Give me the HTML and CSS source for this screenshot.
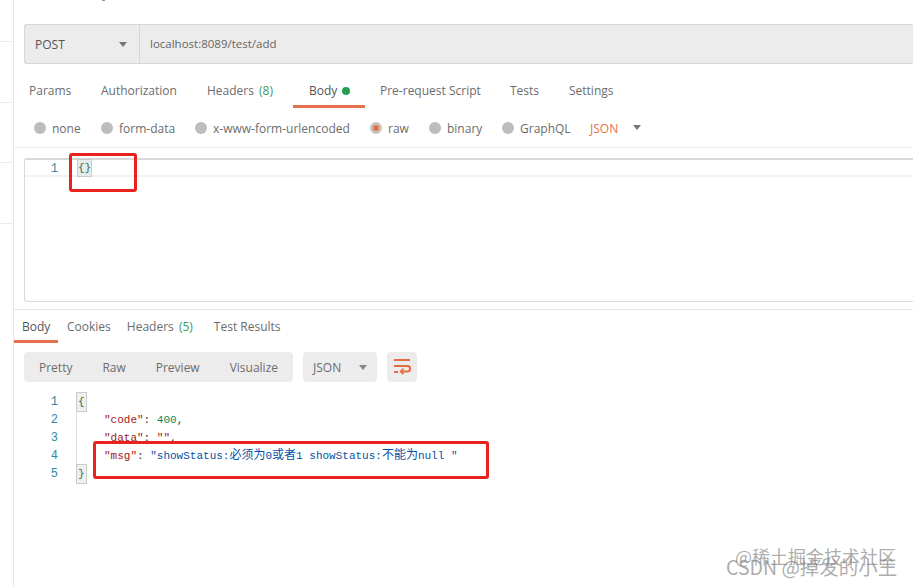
FILE: index.html
```html
<!DOCTYPE html>
<html lang="zh">
<head>
<meta charset="utf-8">
<title>Postman</title>
<link rel="stylesheet" href="styles.css">
</head>
<body>
<div class="app">
  <aside class="sidebar">
    <div class="side-row side-first"></div>
    <div class="side-row"></div>
    <div class="side-row"></div>
    <div class="side-row"></div>
  </aside>
  <main class="main">
    <div class="url-bar">
      <div class="method"><span>POST</span><i class="caret"></i></div>
      <div class="url">localhost:8089/test/add</div>
    </div>
    <nav class="req-tabs">
      <span class="tab t-params">Params</span>
      <span class="tab t-auth">Authorization</span>
      <span class="tab t-headers">Headers <em>(8)</em></span>
      <span class="tab t-body active">Body <b class="dot"></b></span>
      <span class="tab t-pre">Pre-request Script</span>
      <span class="tab t-tests">Tests</span>
      <span class="tab t-settings">Settings</span>
    </nav>
    <div class="radios">
      <label class="radio r-none"><i></i>none</label>
      <label class="radio r-form"><i></i>form-data</label>
      <label class="radio r-url"><i></i>x-www-form-urlencoded</label>
      <label class="radio r-raw on"><i></i>raw</label>
      <label class="radio r-bin"><i></i>binary</label>
      <label class="radio r-gql"><i></i>GraphQL</label>
      <span class="lang">JSON</span><i class="caret caret-lang"></i>
    </div>
    <div class="editor">
      <div class="ed-line"><span class="num">1</span><span class="brace">{}</span></div>
    </div>
    <div class="res-pane">
      <nav class="res-tabs">
        <span class="rtab active">Body</span>
        <span class="rtab">Cookies</span>
        <span class="rtab r-head">Headers <em>(5)</em></span>
        <span class="rtab">Test Results</span>
      </nav>
      <div class="toolbar">
        <div class="views">
          <span>Pretty</span><span>Raw</span><span>Preview</span><span>Visualize</span>
        </div>
        <div class="fmt"><span>JSON</span><i class="caret"></i></div>
        <div class="wrap">
          <svg width="20" height="18" viewBox="0 1 20 18" fill="none" stroke="#e46c3f" stroke-width="2">
            <path d="M2 3h16"/>
            <path d="M2 9h13.5a2.7 2.7 0 0 1 0 5.4H9"/>
            <path d="M2 15h4"/>
            <path d="M11.5 11.6 8.5 14.4l3 2.8" stroke-width="1.6"/>
          </svg>
        </div>
      </div>
      <div class="code">
        <div class="cl"><span class="num">1</span><span class="txt"><span class="mb">{</span></span></div>
        <div class="cl"><span class="num">2</span><span class="txt in"><span class="k">"code"</span>: <span class="n">400</span>,</span></div>
        <div class="cl"><span class="num">3</span><span class="txt in"><span class="k">"data"</span>: <span class="s2">""</span>,</span></div>
        <div class="cl"><span class="num">4</span><span class="txt in"><span class="k">"msg"</span>: <span class="s">"showStatus:<span class="cjk">必须为</span>0<span class="cjk">或者</span>1 showStatus:<span class="cjk">不能为</span>null "</span></span></div>
        <div class="cl"><span class="num">5</span><span class="txt"><span class="mb">}</span></span></div>
      </div>
    </div>
  </main>
</div>
<div class="frag"></div>
<div class="mark mark-a"></div>
<div class="mark mark-b"></div>
<div class="wm wm-1">@稀土掘金技术社区</div>
<div class="wm wm-2">CSDN @掉发的小王</div>
</body>
</html>
```
FILE: styles.css
```css
* { box-sizing: border-box; }
html, body { margin: 0; height: 100%; background: #fff; overflow: hidden; }
body { font-family: "Open Sans", "Noto Sans CJK SC", sans-serif; font-size: 12px; color: #6c6c6c; position: relative; }
em { font-style: normal; color: #3d9a64; }
i { display: block; font-style: normal; }

.app { display: flex; height: 586px; }
.sidebar { width: 14px; flex: none; border-right: 1px solid #e6e6e6; }
.side-row { height: 60.5px; border-bottom: 1px solid #ececec; }
.side-first { height: 42px; }
.main { flex: 1; min-width: 0; }

.caret { width: 0; height: 0; border-left: 4px solid transparent; border-right: 4px solid transparent; border-top: 5px solid #777; }

.url-bar { display: flex; height: 40px; margin: 24px 0 0 10px; background: #ececec; border: 1px solid #d8d8d8; border-right: 0; border-radius: 3px 0 0 3px; }
.method { width: 115px; flex: none; display: flex; align-items: center; justify-content: space-between; padding: 0 12px 0 10px; border-right: 1px solid #d8d8d8; color: #555; font-weight: 500; }
.url { padding: 0 10px; line-height: 37px; color: #666; font-size: 11.5px; }

.req-tabs { position: relative; height: 44px; }
.tab { position: absolute; top: 18px; line-height: 18px; white-space: nowrap; }
.t-params { left: 15px; }
.t-auth { left: 87px; }
.t-headers { left: 193px; word-spacing: 2px; }
.t-body { left: 279px; top: 17px; width: 72px; height: 27px; padding: 1px 0 0 16px; color: #555; border-bottom: 3px solid #e4714a; word-spacing: 0; }
.t-pre { left: 366px; }
.t-tests { left: 496px; }
.t-settings { left: 555px; }
.dot { display: inline-block; width: 8px; height: 8px; margin-left: 2px; border-radius: 50%; background: #22a04f; }

.radios { position: relative; height: 40px; border-bottom: 1px solid #ececec; }
.radio { position: absolute; top: 12px; display: flex; align-items: center; gap: 6px; line-height: 18px; white-space: nowrap; }
.radio i { width: 12px; height: 12px; margin-top: -2px; border-radius: 50%; background: #bdbdbd; }
.radio.on i { background: #e8703f; border: 3px solid #c9c3c0; }
.r-none { left: 20px; }
.r-form { left: 87px; }
.r-url { left: 181px; }
.r-raw { left: 356px; }
.r-bin { left: 415px; }
.r-gql { left: 488px; }
.lang { position: absolute; left: 576px; top: 12px; line-height: 18px; color: #e4714a; }
.caret-lang { position: absolute; left: 619px; top: 17px; }

.editor { height: 144px; margin: 10px 0 0 10px; border: 1px solid #d9d9d9; border-right: 0; border-top-width: 2px; border-radius: 3px 0 0 3px; }
.ed-line { display: flex; align-items: center; height: 17px; border-bottom: 2px solid #f2f2f2; font: 11px/16px "Liberation Mono", monospace; }
.ed-line .num { width: 33px; padding-top: 3px; text-align: right; font-size: 12px; color: #2d8aa0; }
.brace { margin-left: 20px; background: #e6ecec; outline: 1px solid #c6cccc; color: #2c6e57; height: 16px; line-height: 17px; }

.res-pane { margin-top: 7px; border-top: 1px solid #e6e6e6; }
.res-tabs { display: flex; height: 33px; margin-bottom: 9px; }
.rtab { padding: 8px 0 0; margin-right: 16px; line-height: 18px; white-space: nowrap; }
.r-head { word-spacing: 2px; margin-right: 21px; }
.rtab.active { width: 44px; padding-left: 8px; margin-right: 9px; color: #555; border-bottom: 3px solid #e4714a; }

.toolbar { display: flex; gap: 10px; height: 30px; margin-left: 10px; }
.views { display: flex; width: 269px; align-items: center; justify-content: space-between; padding: 0 15px; background: #ececec; border-radius: 4px; }
.fmt { display: flex; width: 74px; align-items: center; justify-content: space-between; padding: 0 10px; background: #ececec; border-radius: 4px; }
.fmt .caret { border-top-color: #888; }
.wrap { display: flex; width: 30px; align-items: center; justify-content: center; background: #ececec; border-radius: 4px; }

.code { margin-top: 11px; font: 11px/18px "Liberation Mono", "Noto Sans CJK SC", monospace; }
.cl { display: flex; height: 18px; white-space: pre; }
.cl .num { width: 44px; text-align: right; font-size: 12px; color: #2d8aa0; }
.txt { margin-left: 18px; color: #333; border-left: 1px solid #dcdcdc; }
.in { padding-left: 27px; }
.mb { display: inline-block; height: 18px; padding: 0 1px; background: #eef0ee; outline: 1px solid #c9cdc9; color: #2c6e57; }
.k { color: #a31515; }
.n { color: #09885a; }
.s2 { color: #a31515; }
.s { color: #0451a5; }
.cjk { font-family: "Noto Sans CJK SC", sans-serif; font-size: 12px; line-height: 0; }

.frag { position: absolute; left: 102px; top: 0; width: 3px; height: 1px; background: #999; }
.mark { position: absolute; border: 3px solid #e8231d; border-radius: 3px; }
.mark-a { left: 69px; top: 153px; width: 68px; height: 39px; }
.mark-b { left: 93px; top: 441px; width: 396px; height: 38px; }

.wm { position: absolute; font-family: "Noto Sans CJK SC", sans-serif; color: rgba(125,125,125,.65); white-space: nowrap; }
.wm-1 { left: 735px; top: 545px; font-size: 18px; line-height: 22px; }
.wm-2 { left: 726px; top: 555px; font-size: 19.5px; line-height: 24px; }
```
